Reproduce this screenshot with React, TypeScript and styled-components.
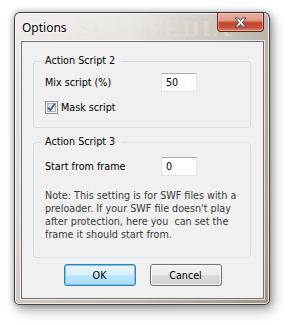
import React from 'react';
import styled, { createGlobalStyle } from 'styled-components';

const GlobalStyle = createGlobalStyle`
  html, body {
    margin: 0;
    padding: 0;
    background: #fff;
  }
  body {
    font-family: "DejaVu Sans Condensed", "DejaVu Sans", sans-serif;
    font-stretch: condensed;
  }
`;

const uiFont = `"DejaVu Sans Condensed", "DejaVu Sans", sans-serif`;

const Page = styled.div`
  padding: 12px 0 0 14px;
  width: 290px;
  height: 325px;
  box-sizing: border-box;
`;

const Window = styled.div`
  position: relative;
  width: 256px;
  box-sizing: border-box;
  border: 1px solid rgba(40, 40, 40, 0.85);
  border-radius: 6px 6px 5px 5px;
  padding: 0 5px 5px 6px;
  background:
    linear-gradient(90deg, rgba(255, 255, 255, 0.25) 0%, rgba(255, 255, 255, 0) 45%, rgba(90, 70, 50, 0.3) 100%),
    linear-gradient(180deg, #eceae7 0%, #e6e2dd 12%, #d9d5d0 45%, #cfc8c1 80%, #c0b6ab 100%);
  box-shadow:
    inset 0 0 0 1px rgba(255, 255, 255, 0.75),
    0 0 6px rgba(0, 0, 0, 0.3),
    3px 5px 12px rgba(0, 0, 0, 0.35);
`;

const TitleBar = styled.div`
  position: relative;
  height: 28px;
  display: flex;
  align-items: flex-start;
  justify-content: space-between;
`;

const Title = styled.span`
  margin: 8px 0 0 1px;
  font-family: "Noto Sans", "Open Sans", sans-serif;
  font-size: 12px;
  line-height: 14px;
  color: #000;
  text-shadow: 0 0 6px #fff, 0 0 3px #fff;
  position: relative;
  z-index: 1;
`;

// faint site stamp that sits over the glass title bar
const Watermark = styled.span`
  position: absolute;
  top: 3px;
  left: 56px;
  font-family: "Liberation Serif", serif;
  font-weight: bold;
  font-size: 24px;
  letter-spacing: 2px;
  line-height: 1;
  pointer-events: none;
  color: rgba(175, 155, 130, 0.13);
  text-shadow: 0 0 1px rgba(255, 255, 255, 0.4);
`;

const CloseButton = styled.div`
  position: relative;
  z-index: 1;
  width: 47px;
  height: 19px;
  box-sizing: border-box;
  border: 1px solid #5b2b22;
  border-top: none;
  border-radius: 0 0 4px 4px;
  background: linear-gradient(180deg, #eab0a2 0%, #e19c8b 40%, #c44129 55%, #c9533a 80%, #dc8c74 100%);
  box-shadow: inset 0 0 0 1px rgba(255, 200, 190, 0.5);
  display: flex;
  align-items: center;
  justify-content: center;
`;

const Client = styled.div`
  border: 1px solid #707070;
  background: #f0f0f0;
  padding: 12px 12px 12px 11px;
  box-shadow: 0 0 0 1px rgba(255, 255, 255, 0.7);
`;

const Group = styled.fieldset<{ $top: number; $bottom: number }>`
  margin: 0;
  min-width: 0;
  border: 1px solid #d5dfe5;
  border-radius: 3px;
  padding: ${(p) => p.$top}px 8px ${(p) => p.$bottom}px 11px;
  & + & {
    margin-top: 7px;
  }
`;

const Legend = styled.legend`
  padding: 0 6px 0 4px;
  margin-left: -4px;
  font-family: ${uiFont};
  font-size: 10.7px;
  line-height: 14px;
  color: #000;
`;

const Row = styled.div`
  display: flex;
  align-items: center;
  height: 19px;
`;

const Label = styled.span`
  width: 116px;
  font-family: ${uiFont};
  font-size: 10.7px;
  color: #000;
`;

const TextBox = styled.div`
  width: 36px;
  height: 19px;
  box-sizing: border-box;
  background: #fff;
  border: 1px solid #e2e3ea;
  border-top-color: #abadb3;
  padding-left: 4px;
  font-family: ${uiFont};
  font-size: 10.7px;
  line-height: 17px;
  color: #000;
`;

const CheckRow = styled.div`
  display: flex;
  align-items: center;
  height: 13px;
  margin-top: 9px;
  gap: 3px;
  font-family: ${uiFont};
  font-size: 10.7px;
  color: #000;
`;

const Note = styled.p`
  margin: 13px 0 0;
  font-family: ${uiFont};
  font-size: 10.7px;
  line-height: 13px;
  color: #3a3a3a;
  white-space: pre;
`;

const Buttons = styled.div`
  display: flex;
  justify-content: center;
  gap: 14px;
  margin-top: 6px;
  padding-left: 1px;
`;

const Button = styled.div<{ $default?: boolean }>`
  width: 72px;
  height: 22px;
  box-sizing: border-box;
  border-radius: 3px;
  border: 1px solid ${(p) => (p.$default ? '#3c7fb1' : '#707070')};
  background: ${(p) =>
    p.$default
      ? 'linear-gradient(180deg, #e9f6fd 0%, #d9f0fc 50%, #bee6fd 50%, #a9dbf6 100%)'
      : 'linear-gradient(180deg, #f2f2f2 0%, #ebebeb 50%, #dddddd 50%, #cfcfcf 100%)'};
  box-shadow: inset 0 0 0 1px ${(p) => (p.$default ? 'rgba(100,195,240,0.9)' : 'rgba(255,255,255,0.8)')};
  display: flex;
  align-items: center;
  justify-content: center;
  font-family: ${uiFont};
  font-size: 10.7px;
  color: #000;
`;

const CloseIcon = () => (
  <svg width="13" height="11" viewBox="0 0 13 11">
    <path
      d="M1 1 H4.5 L6.5 3.6 L8.5 1 H12 L8.3 5.5 L12 10 H8.5 L6.5 7.4 L4.5 10 H1 L4.7 5.5 Z"
      fill="#fff"
      stroke="#3c3c3c"
      strokeWidth="1"
      strokeLinejoin="round"
    />
  </svg>
);

const CheckBox = () => (
  <svg width="13" height="13" viewBox="0 0 13 13">
    <defs>
      <linearGradient id="cbfill" x1="0" y1="0" x2="1" y2="1">
        <stop offset="0" stopColor="#cbcfd5" />
        <stop offset="1" stopColor="#f6f6f6" />
      </linearGradient>
    </defs>
    <rect x="0.5" y="0.5" width="12" height="12" fill="#f4f4f4" stroke="#8e8f8f" />
    <rect x="2.5" y="2.5" width="8" height="8" fill="url(#cbfill)" stroke="#aeb3b9" />
    <path d="M3 6.5 L5.3 9 L10 2.6" fill="none" stroke="#4a5f97" strokeWidth="1.8" />
  </svg>
);

const App = () => {
  return (
    <>
      <GlobalStyle />
      <Page>
        <Window>
          <TitleBar>
            <Title>Options</Title>
            <Watermark>SOFTPEDIA</Watermark>
            <CloseButton>
              <CloseIcon />
            </CloseButton>
          </TitleBar>
          <Client>
            <Group $top={5} $bottom={13}>
              <Legend>Action Script 2</Legend>
              <Row>
                <Label>Mix script (%)</Label>
                <TextBox>50</TextBox>
              </Row>
              <CheckRow>
                <CheckBox />
                Mask script
              </CheckRow>
            </Group>
            <Group $top={8} $bottom={16}>
              <Legend>Action Script 3</Legend>
              <Row>
                <Label>Start from frame</Label>
                <TextBox>0</TextBox>
              </Row>
              <Note>
                {'Note: This setting is for SWF files with a'}
                <br />
                {"preloader. If your SWF file doesn't play"}
                <br />
                {'after protection, here you  can set the'}
                <br />
                {'frame it should start from.'}
              </Note>
            </Group>
            <Buttons>
              <Button $default>OK</Button>
              <Button>Cancel</Button>
            </Buttons>
          </Client>
        </Window>
      </Page>
    </>
  );
};

export default App;
